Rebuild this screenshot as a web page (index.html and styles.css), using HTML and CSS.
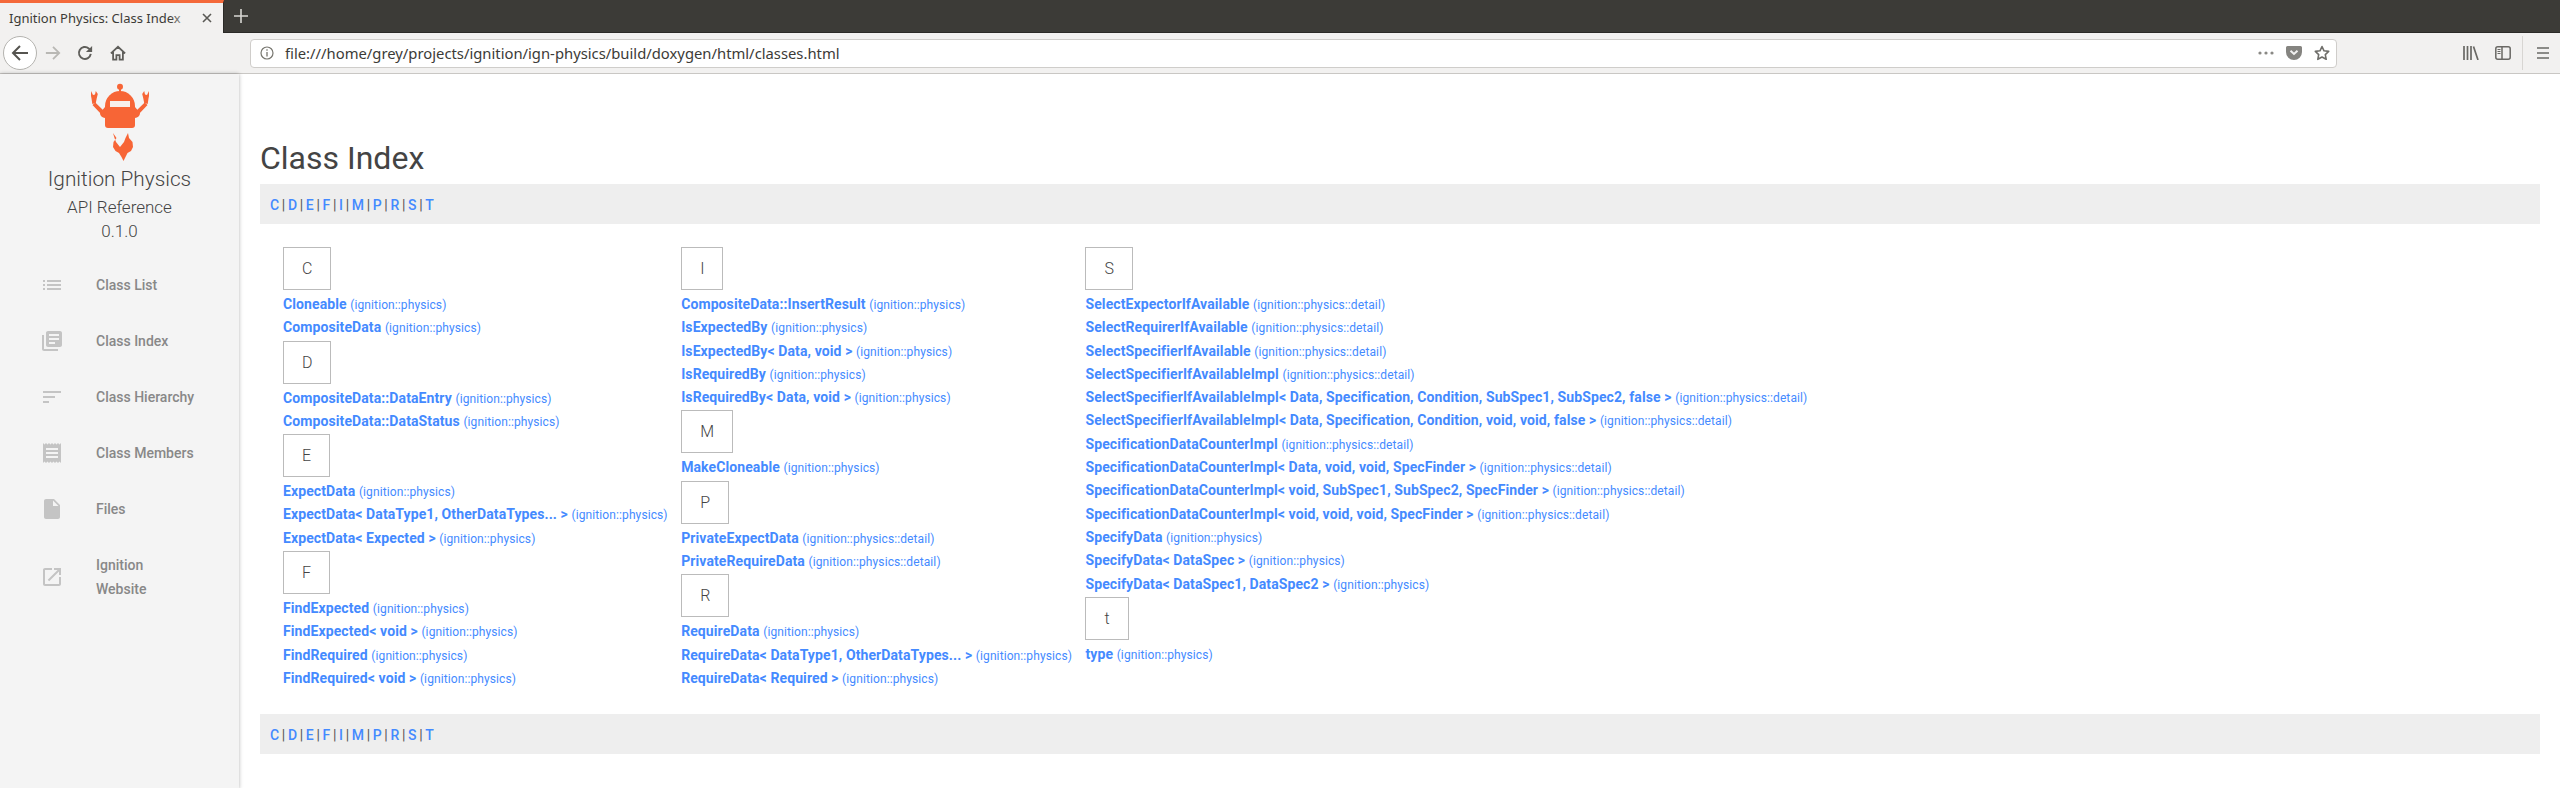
FILE: index.html
```html
<!DOCTYPE html>
<html lang="en">
<head>
  <meta charset="UTF-8">
  <meta name="viewport" content="width=device-width, initial-scale=1.0">
  <title>Ignition Physics: Class Index</title>
  <link rel="stylesheet" href="styles.css">
</head>
<body>
<div class="tabbar">
  <div class="tab">
    <span class="tab-title">Ignition Physics: Class Index</span>
    <svg class="tab-close" width="12" height="12" viewBox="0 0 12 12"><path d="M2 2l8 8M10 2l-8 8" stroke="#5a5955" stroke-width="1.6" fill="none"/></svg>
  </div>
  <svg class="tab-new" width="16" height="16" viewBox="0 0 16 16"><path d="M8 1v14M1 8h14" stroke="#d8d7d3" stroke-width="1.6" fill="none"/></svg>
</div>

<div class="toolbar">
  <div class="back-btn">
    <svg width="18" height="18" viewBox="0 0 18 18"><path d="M17 9H2.500M9 2L2 9l7 7" stroke="#55544f" stroke-width="2" fill="none"/></svg>
  </div>
  <svg class="nav-icon forward" width="16" height="16" viewBox="0 0 18 18"><path d="M1 9h14.500M9 2l7 7-7 7" stroke="#b9b8b4" stroke-width="2" fill="none"/></svg>
  <svg class="nav-icon reload" width="16" height="16" viewBox="0 0 18 18"><path d="M15.500 10A6.700 6.700 0 1 1 13.200 3.800L15.500 6" stroke="#5f5e5a" stroke-width="2.200" fill="none"/><path d="M17 1v7h-7z" fill="#5f5e5a"/></svg>
  <svg class="nav-icon home" width="16" height="16" viewBox="0 0 18 18"><path d="M1 9.500L9 2l8 7.500M3.500 8v8.500h3.700v-5h3.600v5h3.700V8" stroke="#5f5e5a" stroke-width="2" fill="none"/></svg>
  <div class="urlbar">
    <svg class="info-icon" width="14" height="14" viewBox="0 0 14 14"><circle cx="7" cy="7" r="6" stroke="#77766f" stroke-width="1.200" fill="none"/><path d="M7 6v4.500M7 3.300v1.400" stroke="#77766f" stroke-width="1.300"/></svg>
    <span class="url">file:///home/grey/projects/ignition/ign-physics/build/doxygen/html/classes.html</span>
    <svg width="16" height="4" viewBox="0 0 16 4"><circle cx="2" cy="2" r="1.600" fill="#8a8985"/><circle cx="8" cy="2" r="1.600" fill="#8a8985"/><circle cx="14" cy="2" r="1.600" fill="#8a8985"/></svg>
    <svg class="pocket" width="16" height="14" viewBox="0 0 16 14"><path d="M1.500 0h13A1.500 1.500 0 0 1 16 1.500V6A8 8 0 0 1 0 6V1.500A1.500 1.500 0 0 1 1.500 0z" fill="#858480"/><path d="M4.500 4.800L8 8l3.500-3.200" stroke="#f2f1f0" stroke-width="2" fill="none"/></svg>
    <svg class="star" width="16" height="16" viewBox="0 0 16 16"><path d="M8 1.500l2 4.300 4.700.6-3.400 3.200.9 4.700L8 12l-4.200 2.300.9-4.700L1.300 6.400 6 5.800z" stroke="#6f6e6a" stroke-width="1.600" fill="none" stroke-linejoin="round"/></svg>
  </div>
  <svg class="library" width="16" height="14" viewBox="0 0 16 14"><path d="M1 0v14M4.500 0v14M8 0v14M10.500 0.500L15 14" stroke="#6a6965" stroke-width="1.700" fill="none"/></svg>
  <svg class="panel" width="16" height="14" viewBox="0 0 16 14"><rect x="0.800" y="0.800" width="14.400" height="12.400" rx="2" stroke="#6a6965" stroke-width="1.500" fill="none"/><path d="M7 1v12" stroke="#6a6965" stroke-width="1.500"/><path d="M2.500 3.500h3M2.500 5.500h3M2.500 7.500h3" stroke="#6a6965" stroke-width="1"/></svg>
  <div class="divider"></div>
  <svg class="menu" width="14" height="12" viewBox="0 0 14 12"><path d="M1 1h12M1 6h12M1 11h12" stroke="#6a6965" stroke-width="1.600"/></svg>
</div>

<div class="page">
  <nav class="sidebar">
    <svg class="logo" width="80" height="88" viewBox="0 0 80 88">
      <g fill="#f76536">
        <circle cx="40" cy="8.700" r="3"/>
        <rect x="39" y="10" width="2" height="4"/>
        <path d="M25 28a15 15 0 0 1 30 0v19a3 3 0 0 1-3 3H28a3 3 0 0 1-3-3z"/>
        <path d="M25 29l-5 6a5 5 0 0 0 5 5h3v-8zM55 29l5 6a5 5 0 0 1-5 5h-3v-8z"/>
        <path d="M21.500 36.500L12.500 27l2.800-2.600L24 33zM58.500 36.500l9-9.500-2.800-2.600L56 33z"/>
        <path d="M11 13l2 4 2-.5.800-3.500 2 3-1 4-1 5-3.500 1-.8-5.500L11 18zM69 13l-2 4-2-.5-.800-3.500-2 3 1 4 1 5 3.500 1 .8-5.500L69 18z"/>
        <path d="M33 55l1.500 5 1.500 4 4 5 4-5 1.500-4 2.500-5 1 5 3.500 4 .5 5-2 4-3.500 2-2 4-2 4-2-4-2.500-4-3.500-2-2.500-4 .5-5 3-4z"/>
      </g>
      <rect x="30" y="23" width="20" height="6" fill="#f7efec"/>
    </svg>
    <div class="project-name">Ignition Physics</div>
    <div class="project-sub first">API Reference</div>
    <div class="project-sub">0.1.0</div>
    <ul class="nav">
      <li><svg viewBox="0 0 24 24"><path d="M3 13h2v-2H3v2zm0 4h2v-2H3v2zm0-8h2V7H3v2zm4 4h14v-2H7v2zm0 4h14v-2H7v2zM7 7v2h14V7H7z"/></svg><a>Class List</a></li>
      <li><svg viewBox="0 0 24 24"><path d="M4 6H2v14c0 1.100.9 2 2 2h14v-2H4V6zm16-4H8c-1.100 0-2 .9-2 2v12c0 1.100.9 2 2 2h12c1.100 0 2-.9 2-2V4c0-1.100-.9-2-2-2zm-1 9H9V9h10v2zm-4 4H9v-2h6v2zm4-8H9V5h10v2z"/></svg><a>Class Index</a></li>
      <li><svg viewBox="0 0 24 24"><path d="M3 18h6v-2H3v2zM3 6v2h18V6H3zm0 7h12v-2H3v2z"/></svg><a>Class Hierarchy</a></li>
      <li><svg viewBox="0 0 24 24"><path d="M18 17H6v-2h12v2zm0-4H6v-2h12v2zm0-4H6V7h12v2zM3 22l1.500-1.500L6 22l1.500-1.500L9 22l1.500-1.500L12 22l1.500-1.500L15 22l1.500-1.500L18 22l1.500-1.500L21 22V2l-1.500 1.500L18 2l-1.500 1.500L15 2l-1.500 1.500L12 2l-1.500 1.500L9 2 7.500 3.500 6 2 4.500 3.500 3 2v20z"/></svg><a>Class Members</a></li>
      <li><svg viewBox="0 0 24 24"><path d="M6 2c-1.100 0-1.990.9-1.990 2L4 20c0 1.100.89 2 1.990 2H18c1.100 0 2-.9 2-2V8l-6-6H6zm7 7V3.500L18.500 9H13z"/></svg><a>Files</a></li>
      <li><svg viewBox="0 0 24 24"><path d="M19 19H5V5h7V3H5c-1.110 0-2 .9-2 2v14c0 1.100.89 2 2 2h14c1.100 0 2-.9 2-2v-7h-2v7zM14 3v2h3.590l-9.830 9.830 1.410 1.410L19 6.410V10h2V3h-7z"/></svg><a>Ignition<br>Website</a></li>
    </ul>
  </nav>

  <main class="content">
    <h1>Class Index</h1>
    <div class="qindex"><a>C</a> | <a>D</a> | <a>E</a> | <a>F</a> | <a>I</a> | <a>M</a> | <a>P</a> | <a>R</a> | <a>S</a> | <a>T</a></div>

    <div class="columns">
      <div class="col">
        <div class="letter">C</div>
        <div class="row"><a>Cloneable</a> <span>(ignition::physics)</span></div>
        <div class="row"><a>CompositeData</a> <span>(ignition::physics)</span></div>
        <div class="letter">D</div>
        <div class="row"><a>CompositeData::DataEntry</a> <span>(ignition::physics)</span></div>
        <div class="row"><a>CompositeData::DataStatus</a> <span>(ignition::physics)</span></div>
        <div class="letter">E</div>
        <div class="row"><a>ExpectData</a> <span>(ignition::physics)</span></div>
        <div class="row"><a>ExpectData&lt; DataType1, OtherDataTypes... &gt;</a> <span>(ignition::physics)</span></div>
        <div class="row"><a>ExpectData&lt; Expected &gt;</a> <span>(ignition::physics)</span></div>
        <div class="letter">F</div>
        <div class="row"><a>FindExpected</a> <span>(ignition::physics)</span></div>
        <div class="row"><a>FindExpected&lt; void &gt;</a> <span>(ignition::physics)</span></div>
        <div class="row"><a>FindRequired</a> <span>(ignition::physics)</span></div>
        <div class="row"><a>FindRequired&lt; void &gt;</a> <span>(ignition::physics)</span></div>
      </div>
      <div class="col">
        <div class="letter">I</div>
        <div class="row"><a>CompositeData::InsertResult</a> <span>(ignition::physics)</span></div>
        <div class="row"><a>IsExpectedBy</a> <span>(ignition::physics)</span></div>
        <div class="row"><a>IsExpectedBy&lt; Data, void &gt;</a> <span>(ignition::physics)</span></div>
        <div class="row"><a>IsRequiredBy</a> <span>(ignition::physics)</span></div>
        <div class="row"><a>IsRequiredBy&lt; Data, void &gt;</a> <span>(ignition::physics)</span></div>
        <div class="letter">M</div>
        <div class="row"><a>MakeCloneable</a> <span>(ignition::physics)</span></div>
        <div class="letter">P</div>
        <div class="row"><a>PrivateExpectData</a> <span>(ignition::physics::detail)</span></div>
        <div class="row"><a>PrivateRequireData</a> <span>(ignition::physics::detail)</span></div>
        <div class="letter">R</div>
        <div class="row"><a>RequireData</a> <span>(ignition::physics)</span></div>
        <div class="row"><a>RequireData&lt; DataType1, OtherDataTypes... &gt;</a> <span>(ignition::physics)</span></div>
        <div class="row"><a>RequireData&lt; Required &gt;</a> <span>(ignition::physics)</span></div>
      </div>
      <div class="col">
        <div class="letter">S</div>
        <div class="row"><a>SelectExpectorIfAvailable</a> <span>(ignition::physics::detail)</span></div>
        <div class="row"><a>SelectRequirerIfAvailable</a> <span>(ignition::physics::detail)</span></div>
        <div class="row"><a>SelectSpecifierIfAvailable</a> <span>(ignition::physics::detail)</span></div>
        <div class="row"><a>SelectSpecifierIfAvailableImpl</a> <span>(ignition::physics::detail)</span></div>
        <div class="row"><a>SelectSpecifierIfAvailableImpl&lt; Data, Specification, Condition, SubSpec1, SubSpec2, false &gt;</a> <span>(ignition::physics::detail)</span></div>
        <div class="row"><a>SelectSpecifierIfAvailableImpl&lt; Data, Specification, Condition, void, void, false &gt;</a> <span>(ignition::physics::detail)</span></div>
        <div class="row"><a>SpecificationDataCounterImpl</a> <span>(ignition::physics::detail)</span></div>
        <div class="row"><a>SpecificationDataCounterImpl&lt; Data, void, void, SpecFinder &gt;</a> <span>(ignition::physics::detail)</span></div>
        <div class="row"><a>SpecificationDataCounterImpl&lt; void, SubSpec1, SubSpec2, SpecFinder &gt;</a> <span>(ignition::physics::detail)</span></div>
        <div class="row"><a>SpecificationDataCounterImpl&lt; void, void, void, SpecFinder &gt;</a> <span>(ignition::physics::detail)</span></div>
        <div class="row"><a>SpecifyData</a> <span>(ignition::physics)</span></div>
        <div class="row"><a>SpecifyData&lt; DataSpec &gt;</a> <span>(ignition::physics)</span></div>
        <div class="row"><a>SpecifyData&lt; DataSpec1, DataSpec2 &gt;</a> <span>(ignition::physics)</span></div>
        <div class="letter">t</div>
        <div class="row"><a>type</a> <span>(ignition::physics)</span></div>
      </div>
    </div>

    <div class="qindex"><a>C</a> | <a>D</a> | <a>E</a> | <a>F</a> | <a>I</a> | <a>M</a> | <a>P</a> | <a>R</a> | <a>S</a> | <a>T</a></div>
  </main>
</div>
</body>
</html>
```

FILE: styles.css
```css
html, body {
  margin: 0;
  height: 788px;
  overflow: hidden;
  background-color: #fff;
  font-family: Roboto, sans-serif;
}

/* browser chrome */
.tabbar {
  display: flex;
  align-items: center;
  height: 32px;
  background-color: #3c3b37;
  border-bottom: 1px solid #2b2a27;
}

.tab {
  position: relative;
  display: flex;
  align-items: center;
  align-self: flex-start;
  box-sizing: border-box;
  width: 224px;
  height: 33px;
  padding-left: 9px;
  background-color: #f2f1f0;
  border-top: 3px solid #f4693a;
  border-right: 1px solid #2b2a27;
}

.tab-title {
  width: 186px;
  overflow: hidden;
  white-space: nowrap;
  font-family: "Noto Sans", sans-serif;
  font-size: 13px;
  color: #3c3b37;
}

.tab::after {
  content: "";
  position: absolute;
  left: 170px;
  top: 0;
  width: 25px;
  height: 30px;
  background: linear-gradient(to right, rgba(242, 241, 240, 0), #f2f1f0);
}

.tab-close {
  margin-left: 6px;
}

.tab-new {
  margin-left: 9px;
}

.toolbar {
  display: flex;
  align-items: center;
  box-sizing: border-box;
  height: 41px;
  padding-left: 3px;
  background-color: #f2f1f0;
  border-bottom: 1px solid #c9c7c4;
}

.back-btn {
  display: flex;
  align-items: center;
  justify-content: center;
  box-sizing: border-box;
  width: 34px;
  height: 34px;
  border: 1px solid #b4b3af;
  border-radius: 50%;
  background-color: #fff;
}

.forward {
  margin-left: 8px;
}

.reload {
  margin-left: 16px;
}

.home {
  margin-left: 17px;
}

.urlbar {
  display: flex;
  align-items: center;
  box-sizing: border-box;
  width: 2087px;
  height: 29px;
  margin-left: 124px;
  padding: 0 6px 0 9px;
  background-color: #fff;
  border: 1px solid #cfcdca;
  border-radius: 4px;
}

.info-icon {
  margin-right: 11px;
}

.url {
  flex: 1;
  font-family: "Noto Sans", sans-serif;
  font-size: 14.8px;
  color: #3c3b37;
}

.pocket {
  margin-left: 12px;
}

.star {
  margin-left: 12px;
}

.library {
  margin-left: 126px;
}

.panel {
  margin-left: 16px;
}

.divider {
  width: 1px;
  height: 34px;
  margin-left: 11px;
  background-color: #d8d6d3;
}

.menu {
  margin-left: 13px;
}

/* page */
.page {
  display: flex;
  height: 715px;
}

.sidebar {
  display: flex;
  flex-direction: column;
  align-items: center;
  flex: none;
  width: 239px;
  background-color: #f4f4f4;
  box-shadow: 0 0 4px rgba(0, 0, 0, 0.3);
}

.logo {
  flex: none;
  margin-top: 4px;
}

.project-name {
  font-size: 20.8px;
  font-weight: 300;
  line-height: 26px;
  color: #444;
}

.project-sub {
  font-size: 17px;
  font-weight: 300;
  line-height: 24px;
  color: #444;
}

.project-sub.first {
  margin-top: 3px;
}

.nav {
  align-self: stretch;
  margin: 14px 0 0;
  padding: 0;
  list-style: none;
}

.nav li {
  display: flex;
  align-items: center;
  padding: 16px 0 16px 40px;
  font-size: 14px;
  font-weight: 500;
  line-height: 24px;
  color: #888;
}

.nav svg {
  flex: none;
  width: 24px;
  height: 24px;
  margin-right: 32px;
  fill: #c4c4c4;
}

.content {
  flex: 1;
  min-width: 0;
  padding: 0 20px 0 21px;
}

h1 {
  margin: 59px 0 0;
  font-size: 32px;
  font-weight: 400;
  line-height: 51px;
  color: #444;
}

.qindex {
  box-sizing: border-box;
  height: 40px;
  padding: 1px 0 0 10px;
  background-color: #eee;
  font-size: 14px;
  line-height: 40px;
  word-spacing: -0.8px;
  color: #555;
}

.qindex a {
  font-weight: 500;
  color: #448aff;
}

.columns {
  display: flex;
  gap: 13.5px;
  box-sizing: border-box;
  height: 490px;
  padding: 22px 0 0 23px;
}

.letter {
  box-sizing: border-box;
  width: fit-content;
  height: 43px;
  margin: 1px 0 3px;
  padding: 0 18px;
  border: 1px solid #bbb;
  font-size: 16px;
  font-weight: 300;
  line-height: 41px;
  color: #444;
}

.row {
  height: 23.3px;
  font-size: 14px;
  line-height: 23.3px;
  letter-spacing: 0.1px;
  white-space: nowrap;
  color: #555;
}

.row a {
  font-weight: 700;
  color: #448aff;
}

.row span {
  font-size: 12px;
  color: #448aff;
}
```
